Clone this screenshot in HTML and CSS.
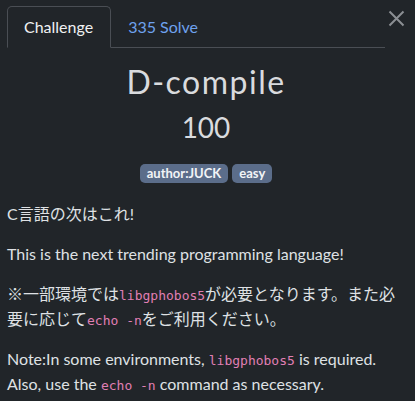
FILE: index.html
```html
<!DOCTYPE html>
<html>
<head>
<meta charset="utf-8">
<link rel="stylesheet" href="styles.css">
</head>
<body>
<div class="modal">
  <div class="header">
    <ul class="tabs">
      <li class="tab active">Challenge</li>
      <li class="tab link">335 Solve</li>
    </ul>
    <button class="close" aria-label="Close">
      <svg width="17" height="17" viewBox="0 0 17 17"><path d="M1.5 1.5 L15.5 15.5 M15.5 1.5 L1.5 15.5" stroke="#8b8e93" stroke-width="2" fill="none"/></svg>
    </button>
  </div>
  <div class="body">
    <h1 class="title">D-compile</h1>
    <div class="value">100</div>
    <div class="badges">
      <span class="badge">author:JUCK</span>
      <span class="badge">easy</span>
    </div>
    <div class="desc">
      <p>C言語の次はこれ!</p>
      <p>This is the next trending programming language!</p>
      <p>※一部環境では<code>libgphobos5</code>が必要となります。また必要に応じて<code>echo -n</code>をご利用ください。</p>
      <p>Note:In some environments, <code>libgphobos5</code> is required. Also, use the <code>echo -n</code> command as necessary.</p>
    </div>
  </div>
</div>
</body>
</html>
```
FILE: styles.css
```css
html, body {
  margin: 0;
  padding: 0;
  background: #212529;
}
body {
  font-family: Lato, "Noto Sans CJK JP", sans-serif;
  color: #dfe1e4;
  font-size: 16px;
  line-height: 24px;
}
.modal {
  padding: 6px 10px 0 7px;
}
.header {
  display: flex;
  align-items: flex-start;
}
.tabs {
  flex: 1;
  display: flex;
  list-style: none;
  margin: 0;
  padding: 0;
  border-bottom: 1px solid #4a4e54;
}
.tab {
  padding: 8px 17px 8px 16px;
  margin-bottom: -1px;
  border: 1px solid transparent;
  border-radius: 5px 5px 0 0;
}
.tab.active {
  border-color: #4a4e54 #4a4e54 #212529;
  color: #f0f1f2;
}
.tab.link {
  color: #6ea2ee;
}
.close {
  background: none;
  border: 0;
  padding: 0;
  margin: 4px 0 0 3px;
  width: 17px;
  height: 17px;
  display: flex;
}
.body {
  text-align: center;
}
.title {
  margin: 14px 0 0;
  font-size: 32px;
  font-weight: 400;
  line-height: 40px;
  letter-spacing: 1.5px;
  color: #d9dbde;
}
.value {
  font-size: 28px;
  line-height: 36px;
  margin-top: 7px;
  color: #d9dbde;
}
.badges {
  display: flex;
  justify-content: center;
  gap: 4px;
  margin-top: 19px;
}
.badge {
  background: #5b6d8a;
  color: #f2f4f7;
  font-size: 13px;
  font-weight: 700;
  line-height: 19px;
  padding: 0 7px 0 7px;
  border-radius: 5px;
}
.desc {
  text-align: left;
  margin-top: 18px;
  font-size: 16px;
  line-height: 25px;
}
.desc p {
  margin: 0 0 15px;
}
code {
  font-family: "DejaVu Sans Mono", monospace;
  font-size: 13px;
  line-height: 0;
  color: #e07fb4;
}
```
